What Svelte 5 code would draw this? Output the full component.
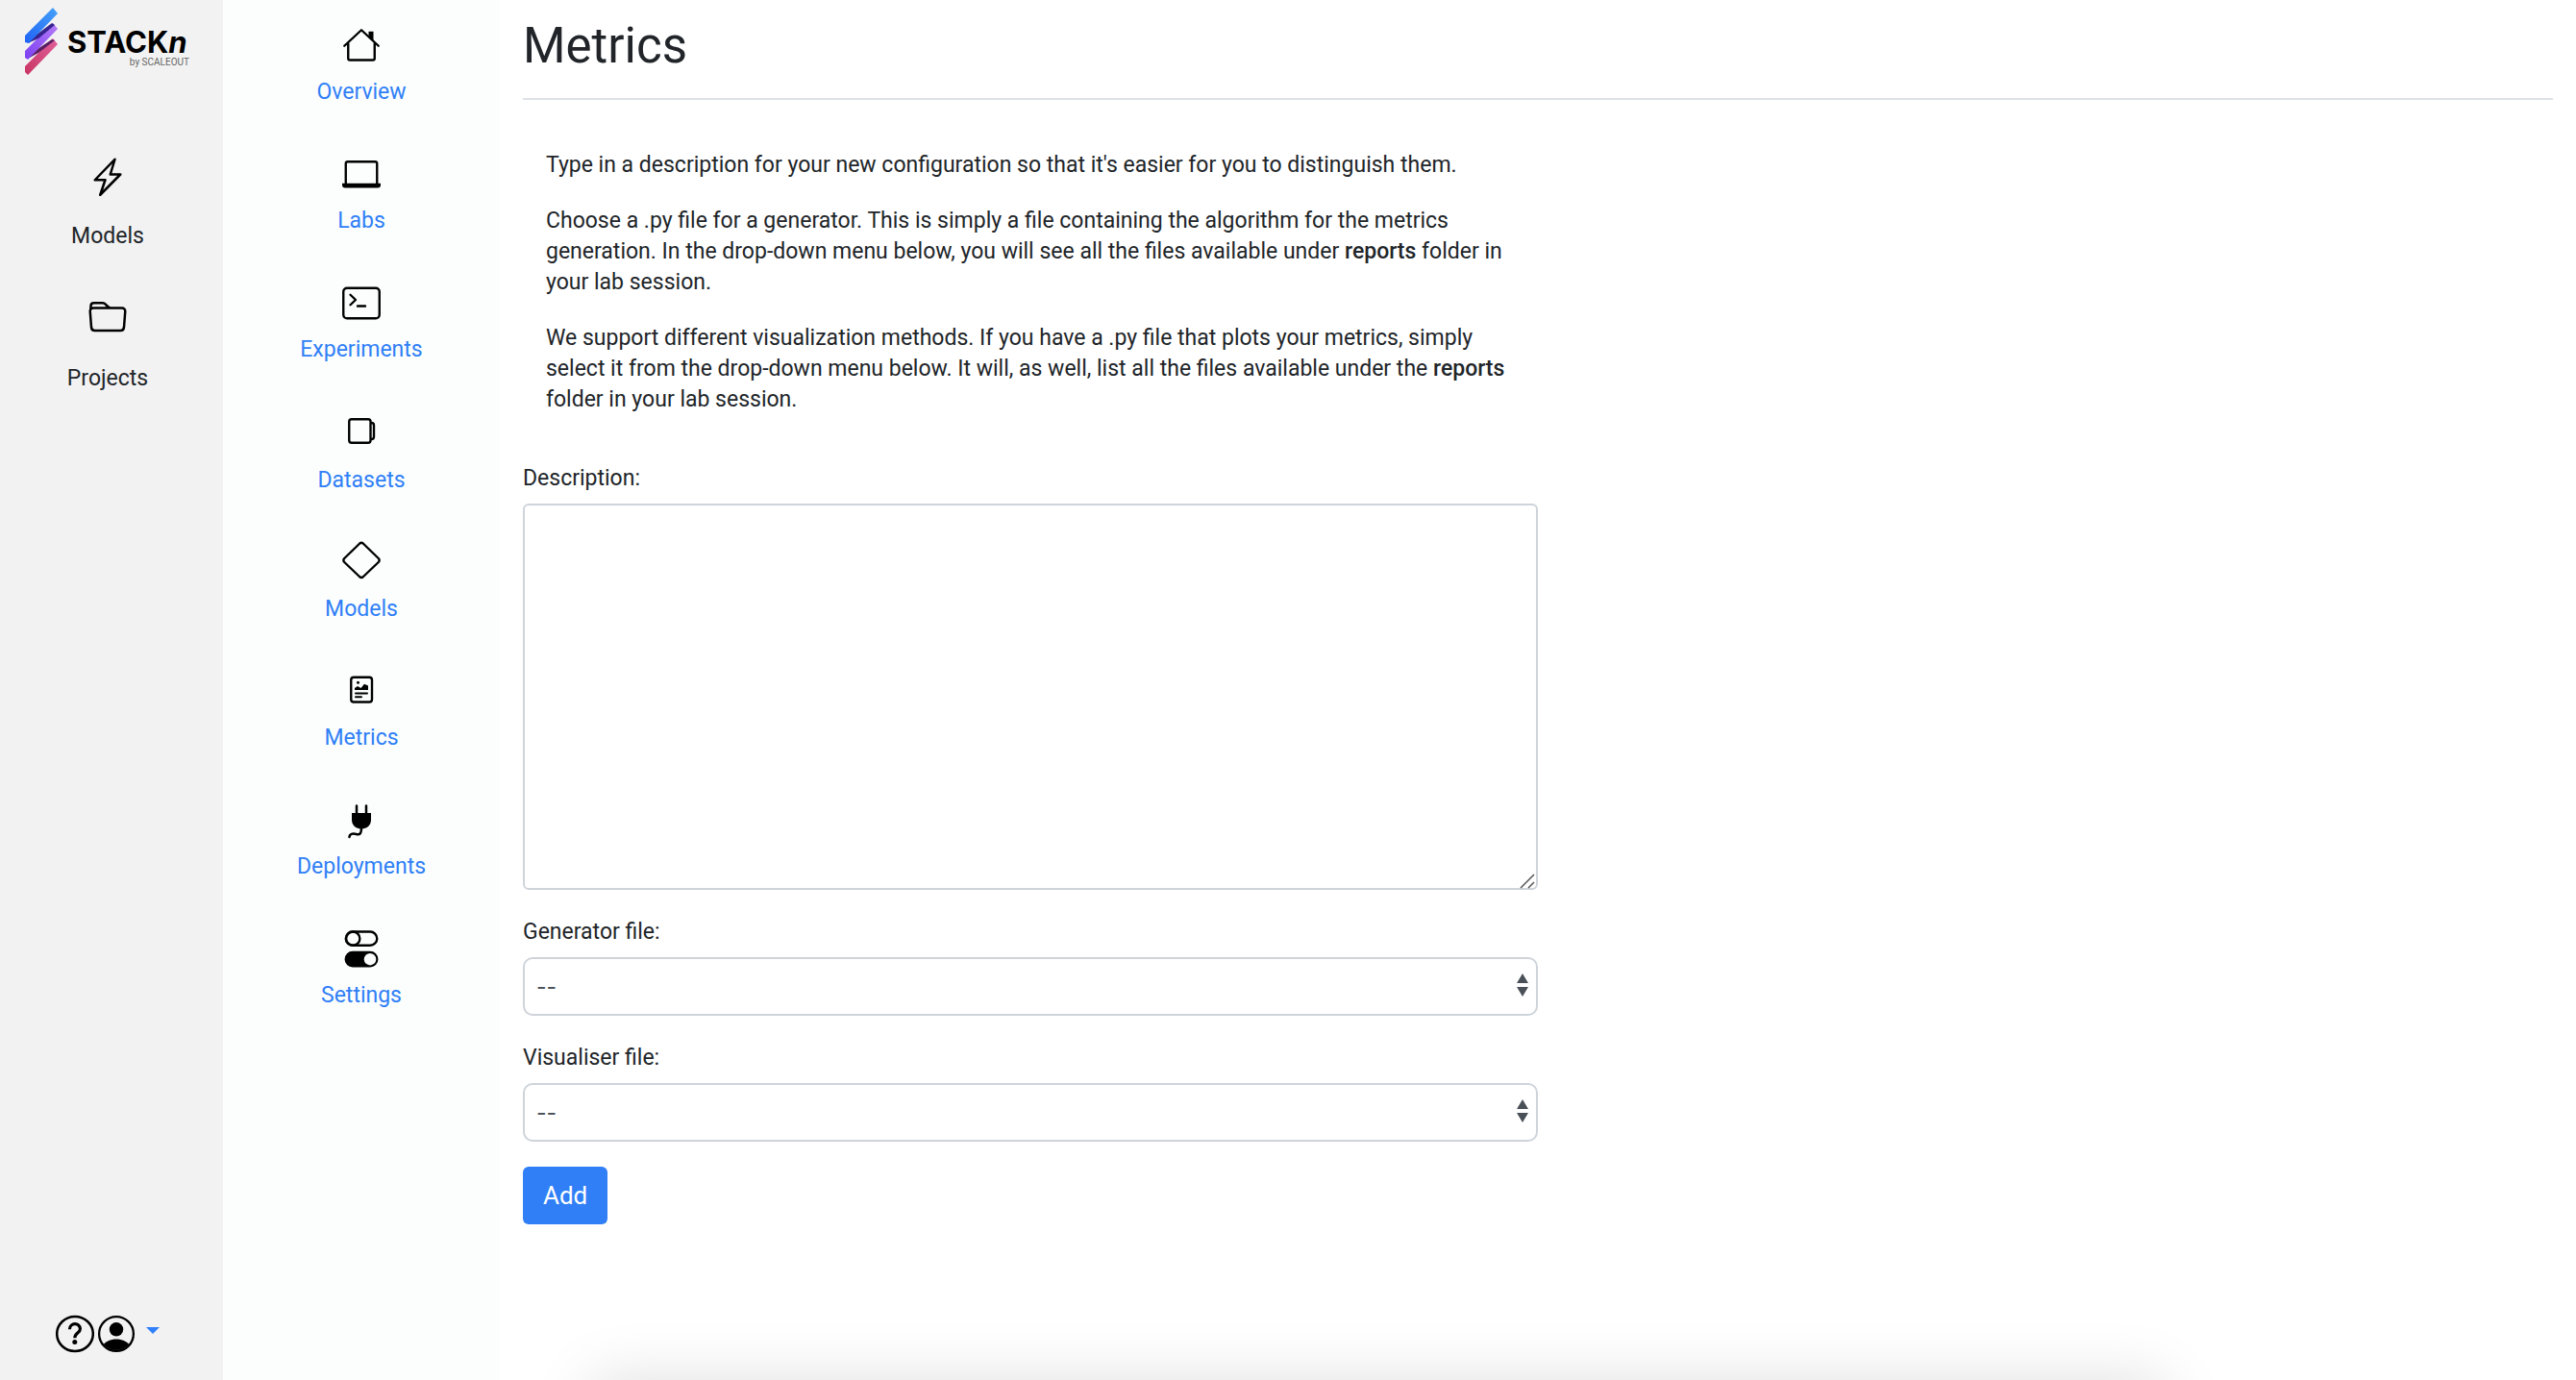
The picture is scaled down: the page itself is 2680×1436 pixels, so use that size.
<script>
  const nav = [
    { label: 'Overview', icon: 'house' },
    { label: 'Labs', icon: 'laptop' },
    { label: 'Experiments', icon: 'terminal' },
    { label: 'Datasets', icon: 'stack' },
    { label: 'Models', icon: 'diamond' },
    { label: 'Metrics', icon: 'report' },
    { label: 'Deployments', icon: 'plug' },
    { label: 'Settings', icon: 'toggles' },
  ];
  const files = [
    { id: 'generator', label: 'Generator file:' },
    { id: 'visualiser', label: 'Visualiser file:' },
  ];
  let description = $state('');
</script>

<div class="app">
  <aside class="rail">
    <a class="logo" href="#home" aria-label="STACKn by SCALEOUT">
      <svg viewBox="0 0 172 72" width="172" height="72">
        <defs>
          <linearGradient id="blue" x1="0" y1="1" x2="1" y2="0"><stop offset="0" stop-color="#1f62f5" /><stop offset="1" stop-color="#46a2fa" /></linearGradient>
          <linearGradient id="violet" x1="0" y1="1" x2="1" y2="0"><stop offset="0" stop-color="#7c3ff2" /><stop offset="1" stop-color="#b47cf8" /></linearGradient>
          <linearGradient id="pink" x1="0" y1="1" x2="1" y2="0"><stop offset="0" stop-color="#c93562" /><stop offset="1" stop-color="#e0609c" /></linearGradient>
        </defs>
        <path d="M0 61L29 32L34 38L3 70L0 67Z" fill="url(#pink)" />
        <path d="M3 53L10 45L28 33L31 34L14 47Z" fill="#5a1f63" />
        <path d="M0 45L29 16L34 22L3 54L0 52Z" fill="url(#violet)" />
        <path d="M3 37L12 28L28 16L31 18L14 32Z" fill="#36248f" />
        <path d="M0 29L29 0L34 6L4 37L0 36Z" fill="url(#blue)" />
        <text class="brand" x="44" y="47">STACK<tspan font-style="italic">n</tspan></text>
        <text class="byline" x="171" y="60" text-anchor="end">by SCALEOUT</text>
      </svg>
    </a>
    <nav class="primary" aria-label="Main">
      <a href="#models">
        <svg class="icon" viewBox="0 0 16 16"><path fill="none" stroke="currentColor" stroke-width="1" stroke-linejoin="round" d="M11 .7L2.7 9.3H7L4.9 15.5L13.3 7H9.1Z" /></svg>
        <span>Models</span>
      </a>
      <a href="#projects">
        <svg class="icon" viewBox="0 0.6 16 16"><path fill="none" stroke="currentColor" stroke-width="1" stroke-linejoin="round" d="M.9 4.9L1 3.1C1 2.2 1.500 1.900 2.300 1.900H6C7.500 1.900 7.700 4 9.200 4H13.800C14.900 4 15.400 4.600 15.300 5.500L14.800 12C14.700 12.900 14.200 13.400 13.400 13.400H2.600C1.800 13.400 1.300 12.900 1.200 12L.7 5.500C.6 4.600 1.100 4 2.100 4H9" /></svg>
        <span>Projects</span>
      </a>
    </nav>
    <div class="account">
      <button class="round" aria-label="Help">
        <svg viewBox="0 0 40 40" width="40" height="40"><ellipse cx="20" cy="20" rx="18.800" ry="18" fill="none" stroke="currentColor" stroke-width="2.500" /><path d="M14.400 15.200C14.600 7.900 25.400 7.900 25.400 14.800C25.400 19.300 19.800 19 19.800 24.300" fill="none" stroke="currentColor" stroke-width="3.200" /><circle cx="19.800" cy="28.600" r="2.500" /></svg>
      </button>
      <button class="menu" aria-label="Account">
        <svg viewBox="0 0 40 40" width="40" height="40"><clipPath id="disc"><circle cx="20" cy="20" r="17" /></clipPath><circle cx="20" cy="20" r="17.900" fill="none" stroke="currentColor" stroke-width="2.300" /><circle cx="20" cy="15.300" r="7.200" /><path clip-path="url(#disc)" d="M5 33C9 27.500 14 25.500 20 25.500S31 27.500 35 33V39H5Z" /></svg>
        <span class="caret"></span>
      </button>
    </div>
  </aside>

  <nav class="project-nav" aria-label="Project">
    {#each nav as item (item.label)}
      <a href={'#' + item.label.toLowerCase()} class={item.icon}>
        <svg class="icon" viewBox="0 0 16 16" fill="none" stroke="currentColor" stroke-width="0.95">
          {#if item.icon === 'house'}
            <path stroke-linecap="round" stroke-linejoin="round" d="M.9 8.300L8 1.700L15.100 8.300M2.500 7.200V13.500Q2.500 14.200 3.200 14.200H12.800Q13.500 14.200 13.500 13.500V7.200" />
            <path fill="currentColor" stroke="none" d="M11 2.300H13V6.700L11 4.800Z" />
          {:else if item.icon === 'laptop'}
            <path d="M1.500 12.200V3.700Q1.500 2.900 2.300 2.900H13.700Q14.500 2.900 14.500 3.700V12.200" />
            <path fill="currentColor" stroke="none" d="M0 11.900H16V12.500Q16 13.800 14.800 13.800H1.200Q0 13.800 0 12.500Z" />
          {:else if item.icon === 'terminal'}
            <rect x=".5" y="1.900" width="15" height="12.600" rx="1.500" />
            <path stroke-linecap="round" stroke-linejoin="round" d="M3.400 4.700L5.600 6.800L3.400 8.900M6.400 9.400H9.600" />
          {:else if item.icon === 'stack'}
            <rect x="2.900" y="2.900" width="8.900" height="9.800" rx="1" />
            <path d="M11.900 4.400H12.200Q13.200 4.400 13.200 5.400V10.200Q13.200 11.200 12.200 11.200H11.900" />
          {:else if item.icon === 'diamond'}
            <path stroke-linejoin="round" d="M7.300 1Q8 .4 8.700 1L15.200 7.300Q15.700 8 15.200 8.700L8.700 14.900Q8 15.500 7.300 14.900L.8 8.700Q.3 8 .8 7.300Z" />
          {:else if item.icon === 'report'}
            <rect x="3.700" y="3.100" width="8.700" height="10.300" rx="1.100" />
            <circle cx="6.600" cy="5.300" r=".6" fill="currentColor" stroke="none" />
            <path fill="currentColor" stroke="none" d="M5.200 8.400V7.600L6.400 6.800L7.800 7.600L9.200 5.900L10.800 6.600V8.400Z" />
            <path stroke-width=".8" stroke-linecap="round" d="M5.600 9.800H10.400M5.600 11.300H8" />
          {:else if item.icon === 'plug'}
            <path stroke-width="1" stroke-linecap="round" d="M6 2.200V5.600M10 2.200V5.600M8 11.100C8 14 7.300 14.300 5.900 14C4.300 13.600 3.100 13.800 3 15.200" />
            <path fill="currentColor" stroke="none" d="M4 5.200H12V7.900C12 10.400 10.300 11.800 8 11.800S4 10.400 4 7.900Z" />
          {:else}
            <rect x="1.500" y="1" width="13" height="5.700" rx="2.850" />
            <circle cx="4.500" cy="3.850" r="2.850" />
            <rect x="1.500" y="9.600" width="13" height="5.700" rx="2.850" fill="currentColor" />
            <circle cx="11.600" cy="12.450" r="2.500" fill="#fbfefd" stroke="none" />
          {/if}
        </svg>
        <span>{item.label}</span>
      </a>
    {/each}
  </nav>

  <main>
    <h1>Metrics</h1>
    <form onsubmit={(e) => e.preventDefault()}>
      <div class="intro">
        <p>Type in a description for your new configuration so that it's easier for you to distinguish them.</p>
        <p>Choose a .py file for a generator. This is simply a file containing the algorithm for the metrics generation. In the drop-down menu below, you will see all the files available under <b>reports</b> folder in your lab session.</p>
        <p>We support different visualization methods. If you have a .py file that plots your metrics, simply select it from the drop-down menu below. It will, as well, list all the files available under the <b>reports</b> folder in your lab session.</p>
      </div>
      <label for="description">Description:</label>
      <div class="control area">
        <textarea id="description" bind:value={description}></textarea>
        <svg class="grip" viewBox="0 0 16 16" width="16" height="16"><path d="M1 15L15 1M9 15L15 9" stroke="#555" stroke-width="1.500" /></svg>
      </div>
      {#each files as file (file.id)}
        <label for={file.id}>{file.label}</label>
        <div class="control">
          <select id={file.id}><option>--</option></select>
          <svg class="arrows" viewBox="0 0 12 24" width="12" height="24"><path fill="#495057" d="M0 10L6 0L12 10ZM0 14H12L6 24Z" /></svg>
        </div>
      {/each}
      <button class="add" type="submit">Add</button>
    </form>
  </main>
  <div class="shade"></div>
</div>

<style>
  :global(body) {
    margin: 0;
  }
  .app {
    position: relative;
    display: flex;
    min-height: 100vh;
    overflow: hidden;
    background: #fff;
    color: #212529;
    font-family: Roboto, "Liberation Sans", sans-serif;
    font-size: 23px;
    line-height: 32px;
  }
  a {
    color: inherit;
    text-decoration: none;
  }
  button {
    font: inherit;
    border: 0;
    padding: 0;
    background: none;
    cursor: pointer;
  }
  .icon {
    width: 40px;
    height: 40px;
    color: #000;
  }
  .rail {
    display: flex;
    flex-direction: column;
    flex: 0 0 232px;
    box-sizing: border-box;
    padding: 8px 0 28px;
    background: #f2f2f2;
  }
  .logo {
    display: flex;
    padding-left: 26px;
  }
  .brand {
    font: bold 31px Inter, sans-serif;
    fill: #000;
  }
  .byline {
    font: 10px Roboto, sans-serif;
    fill: #666;
  }
  .primary {
    display: flex;
    flex-direction: column;
    gap: 36px;
    margin-top: 84px;
  }
  .primary a {
    display: flex;
    flex-direction: column;
    align-items: center;
    gap: 26px;
    width: 224px;
    height: 112px;
  }
  .account {
    display: flex;
    align-items: center;
    gap: 3px;
    margin-top: auto;
    padding-left: 58px;
    color: #000;
  }
  .account button {
    display: flex;
    align-items: center;
    gap: 11px;
    color: inherit;
  }
  .caret {
    margin-bottom: 8px;
    border: 7px solid transparent;
    border-top-color: #2f80fa;
    border-bottom: 0;
  }
  .project-nav {
    flex: 0 0 288px;
    box-sizing: border-box;
    padding-top: 27px;
    background: #fbfefd;
    color: #307ff7;
  }
  .project-nav a {
    display: flex;
    flex-direction: column;
    align-items: center;
    gap: 13px;
    height: 134px;
  }
  .project-nav a.stack,
  .project-nav a.diamond,
  .project-nav a.report {
    gap: 15px;
  }
  .project-nav a.report {
    height: 136px;
  }
  main {
    flex: 1;
    min-width: 0;
    padding: 0 24px;
  }
  h1 {
    margin: 0;
    padding: 14px 0 20px;
    border-bottom: 2px solid #dee2e6;
    font-size: 51px;
    font-weight: 400;
    line-height: 68px;
  }
  form {
    width: 50%;
    padding-top: 24px;
  }
  .intro {
    padding: 28px 24px 22px;
  }
  p {
    margin: 0 0 26px;
  }
  b {
    font-weight: 500;
  }
  label {
    display: block;
    padding-top: 2px;
    margin-bottom: 10px;
  }
  .control {
    position: relative;
    display: flex;
    margin-bottom: 26px;
  }
  textarea,
  select {
    width: 100%;
    box-sizing: border-box;
    border: 2px solid #ced4da;
    background: #fff;
    color: #495057;
    font: inherit;
  }
  textarea {
    height: 402px;
    padding: 12px;
    border-radius: 6px;
    resize: none;
  }
  select {
    height: 61px;
    padding: 0 12px;
    border-radius: 10px;
    appearance: none;
    font-family: Inter, sans-serif;
  }
  .grip {
    position: absolute;
    right: 3px;
    bottom: 1px;
    pointer-events: none;
  }
  .arrows {
    position: absolute;
    right: 10px;
    top: 17px;
    pointer-events: none;
  }
  .add {
    height: 60px;
    padding: 0 21px;
    border-radius: 6px;
    background: #307ff7;
    color: #fff;
    font-size: 26px;
  }
  .shade {
    position: absolute;
    left: 23%;
    right: 16%;
    top: 100%;
    height: 200px;
    box-shadow: 0 0 60px rgba(0, 0, 0, 0.13);
    pointer-events: none;
  }
</style>
